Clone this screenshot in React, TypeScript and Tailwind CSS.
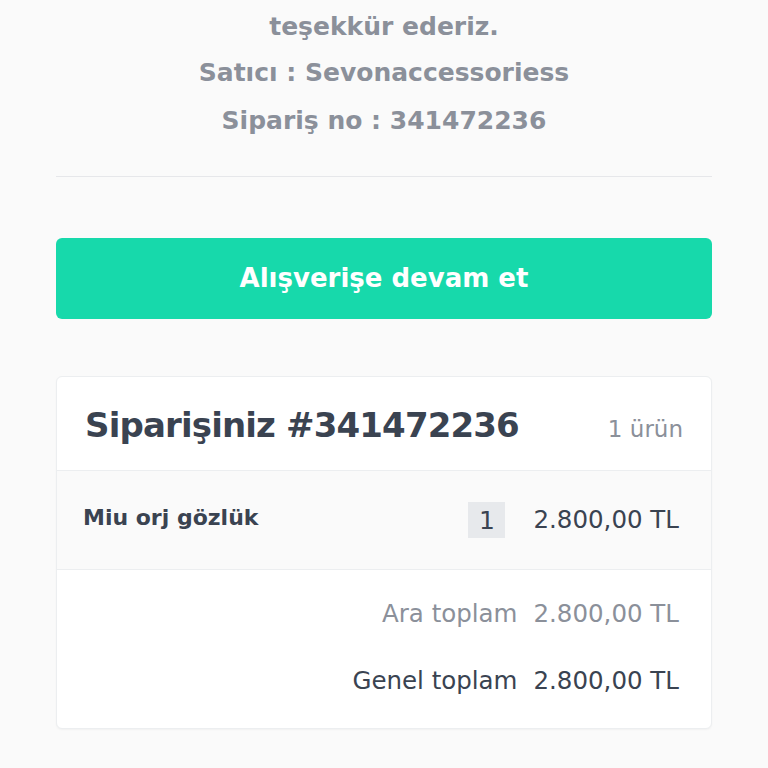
import React from 'react';

const font = { fontFamily: '"DejaVu Sans", "Open Sans", sans-serif' };

export default function App() {
  return (
    <div className="min-h-[768px] bg-[#fafafa] px-14 overflow-hidden" style={font}>
      <div className="flex flex-col items-center text-[#8b909a] font-semibold text-[25px] leading-[48px] mt-[3px]">
        <p className="-mb-[2px]">teşekkür ederiz.</p>
        <p>Satıcı : Sevonaccessoriess</p>
        <p>Sipariş no : 341472236</p>
      </div>

      <div className="mt-[31px] border-t border-[#e6e7ea]" />

      <button className="mt-[61px] w-full h-[81px] rounded-md bg-[#17d9ab] text-white text-[26px] font-semibold">
        Alışverişe devam et
      </button>

      <div className="mt-[57px] bg-white border border-[#eceef0] rounded-md shadow-[0_1px_2px_rgba(0,0,0,0.04)] overflow-hidden">
        <div className="flex items-center justify-between h-[94px] pl-7 pr-7 border-b border-[#eceef0]">
          <h2 className="text-[34px] font-bold text-[#3a4351] tracking-tight mt-1">Siparişiniz #341472236</h2>
          <span className="text-[23px] text-[#8b909a] mt-3">1 ürün</span>
        </div>

        <div className="flex items-start justify-between h-[99px] bg-[#fafafa] pl-[26px] pr-8 pt-[30px] border-b border-[#eceef0]">
          <span className="text-[22px] font-semibold text-[#3a4351]">Miu orj gözlük</span>
          <div className="flex items-center gap-[28px] mt-[1px]">
            <span className="w-[37px] h-[36px] bg-[#e7e9ec] flex items-center justify-center text-[25px] text-[#3a4351]">1</span>
            <span className="text-[24.5px] text-[#3a4351]">2.800,00 TL</span>
          </div>
        </div>

        <div className="flex flex-col items-end pr-8 pt-[26px] pb-[28px] gap-[30px] text-[24.5px]">
          <div className="flex gap-[16px] text-[#8b909a]">
            <span>Ara toplam</span>
            <span>2.800,00 TL</span>
          </div>
          <div className="flex gap-[16px] text-[#3a4351]">
            <span>Genel toplam</span>
            <span>2.800,00 TL</span>
          </div>
        </div>
      </div>
    </div>
  );
}
